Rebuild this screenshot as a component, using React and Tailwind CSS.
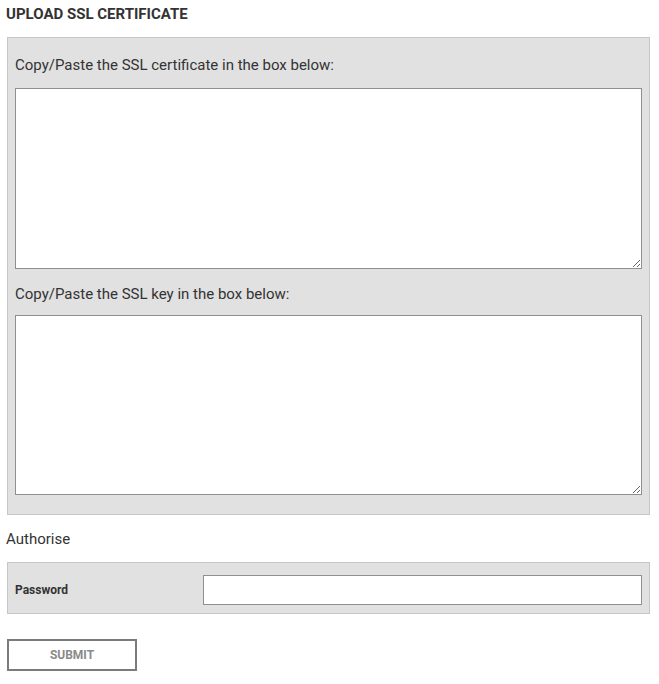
export default function App() {
  return (
    <div
      className="w-[659px] min-h-[684px] bg-white pl-[6px] pr-[9px] text-[#333333]"
      style={{ fontFamily: 'Roboto, "Liberation Sans", Arial, sans-serif' }}
    >
      <h1 className="pt-[4px] text-[15px] font-bold leading-[20px]">UPLOAD SSL CERTIFICATE</h1>

      <div className="mt-[13px] ml-px border border-[#c6c6c6] bg-[#e1e1e1] px-[7px] pt-[17px] pb-[19px]">
        <label className="block text-[15px] leading-[20px]">
          Copy/Paste the SSL certificate in the box below:
        </label>
        <textarea className="mt-[13px] block h-[181px] w-full border border-[#8f8f8f] bg-white text-[13px] outline-none" />
        <label className="mt-[15px] block text-[15px] leading-[20px]">
          Copy/Paste the SSL key in the box below:
        </label>
        <textarea className="mt-[11px] block h-[180px] w-full border border-[#8f8f8f] bg-white text-[13px] outline-none" />
      </div>

      <h2 className="mt-[14px] text-[15px] leading-[20px]">Authorise</h2>

      <div className="mt-[13px] ml-px flex items-center border border-[#c6c6c6] bg-[#e1e1e1] pl-[7px] pr-[7px] pt-[12px] pb-[8px]">
        <label className="w-[188px] shrink-0 text-[12px] font-bold leading-[16px]">Password</label>
        <input
          type="password"
          className="h-[30px] flex-1 border border-[#8f8f8f] bg-white px-2 text-[13px] outline-none"
        />
      </div>

      <button
        type="button"
        className="mt-[25px] ml-px flex h-[32px] w-[130px] items-center justify-center border-2 border-[#7b7b7b] bg-white text-[12px] font-bold leading-[16px] text-[#8a8a8a]"
      >
        SUBMIT
      </button>
    </div>
  );
}
